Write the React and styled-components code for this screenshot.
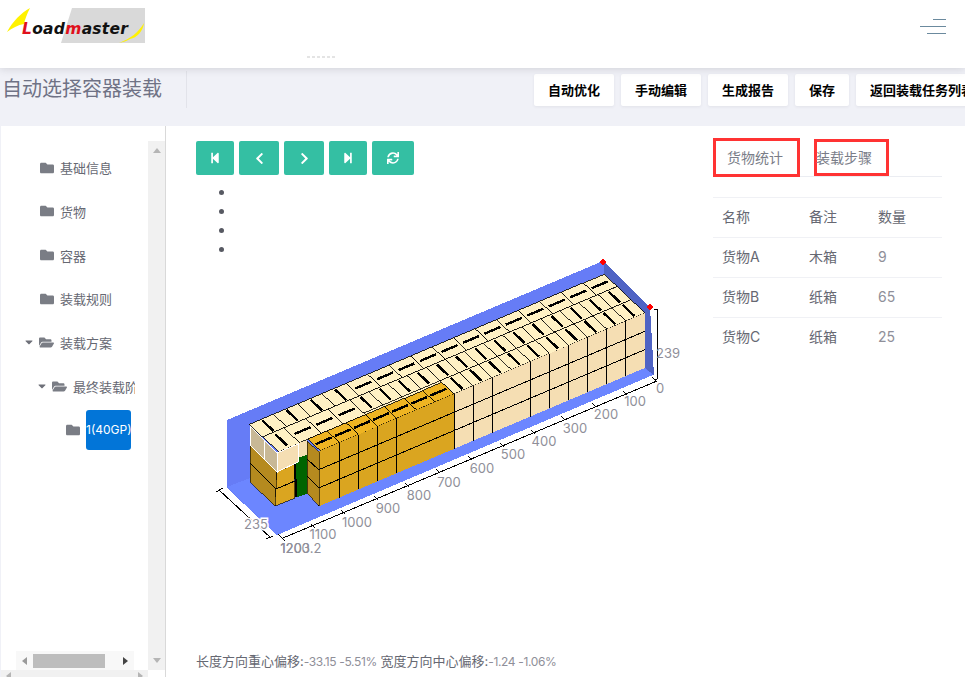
import React from 'react'
import styled, { createGlobalStyle } from 'styled-components'
import {
  FaFolder, FaFolderOpen, FaCaretDown, FaStepBackward, FaStepForward,
  FaChevronLeft, FaChevronRight, FaSync,
} from 'react-icons/fa'

const FONT = `Inter, "Noto Sans CJK SC", "Noto Sans", sans-serif`

const actions = ['自动优化', '手动编辑', '生成报告', '保存', '返回装载任务列表']

const tree = [
  { label: '基础信息', indent: 39 },
  { label: '货物', indent: 39 },
  { label: '容器', indent: 39 },
  { label: '装载规则', indent: 39 },
  { label: '装载方案', indent: 22, open: true },
  { label: '最终装载阶段', indent: 35, open: true },
  { label: '1(40GP)', indent: 65, selected: true },
]

const cargo = [
  { name: '货物A', note: '木箱', qty: 9 },
  { name: '货物B', note: '纸箱', qty: 65 },
  { name: '货物C', note: '纸箱', qty: 25 },
]

// --------------------------------
// CHART GEOMETRY
// --------------------------------

// l: cells along the container from the right end, d: 0-1 across its depth, h: px down
const pt = (l, d, h = 0) => [645 - 19.1 * l - 41 * d, 313 + 8.1 * l - 39 * d + h]
const str = (pts) => pts.map((p) => p.join(',')).join(' ')
const LAYER = 18.3

function Tile({ l0, l1, d0, d1, dash, fill = '#fff1c4' }) {
  const lc = (l0 + l1) / 2
  const dc = (d0 + d1) / 2
  const a = dash === 'l' ? pt(lc - 0.42, dc) : pt(lc, dc - 0.14)
  const b = dash === 'l' ? pt(lc + 0.42, dc) : pt(lc, dc + 0.14)
  return (
    <g>
      <polygon points={str([pt(l0, d0), pt(l1, d0), pt(l1, d1), pt(l0, d1)])} fill={fill} stroke="#000" strokeWidth="0.8" />
      <line x1={a[0]} y1={a[1]} x2={b[0]} y2={b[1]} stroke="#000" strokeWidth="2.4" />
    </g>
  )
}

function range(n) {
  return Array.from({ length: n }, (_, i) => i)
}

function FrontFace({ l0, l1, lines, fill }) {
  return (
    <g>
      <polygon points={str([pt(l0, 0), pt(l1, 0), pt(l1, 0, LAYER * 3), pt(l0, 0, LAYER * 3)])} fill={fill} />
      {lines.map((l) => {
        const a = pt(l, 0)
        const b = pt(l, 0, LAYER * 3)
        return <line key={l} x1={a[0]} y1={a[1]} x2={b[0]} y2={b[1]} stroke="#000" />
      })}
      {[1, 2].map((k) => {
        const a = pt(l0, 0, LAYER * k)
        const b = pt(l1, 0, LAYER * k)
        return <line key={k} x1={a[0]} y1={a[1]} x2={b[0]} y2={b[1]} stroke="#000" />
      })}
    </g>
  )
}

const lengthTicks = [
  [100, 635, 406], [200, 606, 419], [300, 575, 433], [400, 544, 446], [500, 513, 459], [600, 482, 473],
  [700, 449, 487], [800, 419, 500], [900, 388, 513], [1000, 357, 527], [1100, 323, 539],
]

function ContainerChart() {
  return (
    <Chart viewBox="200 258 500 320" width="500" height="320" shapeRendering="crispEdges">
      {/* walls and floor */}
      <polygon points="227,420 603,261 650,307 653,375 277,535 227,488" fill="#667cf6" />
      <polygon points="227,487 277,535 653,375 604,335 250,478" fill="#6c86ff" />
      <polygon points="604,262 650,307 654,375 645,368 645,313 604,274" fill="#4f63c4" />

      {/* top of the pale cargo */}
      <polygon points={str([pt(0, 0), pt(0, 1), pt(18.55, 1), pt(18.55, 0.29), pt(17, 0.29)])} fill="#fff1c4" />
      {range(12).map((i) => <Tile key={`b${i}`} l0={i * 1.125} l1={(i + 1) * 1.125} d0={0.68} d1={1} dash="l" />)}
      {range(14).map((i) => <Tile key={`m${i}`} l0={i} l1={i + 1} d0={0.34} d1={0.68} dash="d" />)}
      {range(10).map((i) => <Tile key={`f${i}`} l0={i} l1={i + 1} d0={0} d1={0.34} dash="d" />)}
      {range(4).map((i) => <Tile key={`e${i}`} l0={13.5 + i * 1.27} l1={13.5 + (i + 1) * 1.27} d0={0.68} d1={1} dash="d" />)}
      {range(3).map((i) => <Tile key={`n${i}`} l0={14 + i * 1.15} l1={14 + (i + 1) * 1.15} d0={0.3} d1={0.68} dash="l" />)}
      <Tile l0={17.45} l1={18.55} d0={0.29} d1={0.68} dash="d" />

      {/* pale front */}
      <FrontFace l0={0} l1={10} lines={[1, 2, 3, 4, 5, 6, 8, 9, 10]} fill="#f5deb3" />

      {/* gold block */}
      {range(7).map((i) => <Tile key={`g${i}`} l0={10 + i} l1={11 + i} d0={0} d1={0.3} dash="l" fill="#eeb422" />)}
      <FrontFace l0={10} l1={17.1} lines={[10, 13, 14, 15, 16, 17.1]} fill="#daa520" />
      <polygon points="319,452 307,441 307,493 319,506" fill="#b58a1f" stroke="#000" strokeWidth="0.6" />
      <line x1="307" y1="459" x2="319" y2="470" stroke="#000" />
      <line x1="307" y1="476" x2="319" y2="488" stroke="#000" />

      {/* left end stack */}
      <polygon points="298,443 307,440 307,456 298,460" fill="#f5deb3" />
      <polygon points="294,459 307,455 307,494 297,497" fill="#006400" />
      <line x1="295" y1="459" x2="296" y2="497" stroke="#000" strokeWidth="2" />
      <polygon points="250,445 277,472 275,506 250,482" fill="#b58a1f" stroke="#000" strokeWidth="0.6" />
      <polygon points="277,472 294,464 295,498 275,506" fill="#daa520" stroke="#000" strokeWidth="0.6" />
      <line x1="250" y1="463" x2="276" y2="489" stroke="#000" />
      <line x1="276" y1="489" x2="295" y2="481" stroke="#000" />
      <polygon points="250,426 264,440 264,459 250,445" fill="#c8b896" stroke="#fff" />
      <polygon points="264,440 277,453 277,472 264,459" fill="#c8b896" stroke="#fff" />
      <polygon points="277,453 298,444 298,462 277,472" fill="#f5deb3" stroke="#fff" />

      {/* corners */}
      <circle cx="603" cy="262" r="2.6" fill="#ff0000" />
      <circle cx="650" cy="307" r="2.6" fill="#ff0000" />

      {/* axes */}
      <g stroke="#000" fill="none">
        <line x1="657" y1="309" x2="657" y2="379" />
        <line x1="654" y1="309" x2="657" y2="309" />
        <line x1="654" y1="379" x2="657" y2="379" />
        <line x1="657" y1="381" x2="283" y2="538" />
        <line x1="278" y1="534" x2="285" y2="541" />
        {[[625, 393], [594, 405], [563, 418], [533, 432], [502, 445], [470, 458], [438, 471], [407, 485], [376, 498], [343, 512], [313, 526], [654, 379]].map(([x, y]) => (
          <line key={x} x1={x - 2} y1={y - 2} x2={x + 2} y2={y + 2} />
        ))}
        <line x1="219" y1="490" x2="271" y2="538" />
        <line x1="216" y1="492" x2="223" y2="488" />
        <line x1="266" y1="539" x2="273" y2="536" />
      </g>
      <AxisLabels textAnchor="middle">
        {lengthTicks.map(([v, x, y]) => <text key={v} x={x} y={y}>{v}</text>)}
        <text x="660" y="393">0</text>
        <text x="668" y="358">239</text>
        <HaloText x="256" y="529">235</HaloText>
        <text x="295" y="553">1200</text>
        <text x="301" y="553">1203.2</text>
      </AxisLabels>
    </Chart>
  )
}

// --------------------------------
// PAGE
// --------------------------------

function Logo() {
  return (
    <svg width="150" height="48" viewBox="0 0 150 48">
      <polygon points="72,8 145,8 145,43 61,43" fill="#d9d9d9" />
      <path d="M7 32 C13 21 21 13 30 8 C27 14 25 19 24 24 C18 25 12 28 7 32 Z" fill="#fff200" />
      <path d="M119 43 C130 39 139 32 144 23 C143 31 137 38 130 39 C127 41 123 42 119 43 Z" fill="#fff200" />
      <text x="22" y="33.5" fontFamily="'DejaVu Sans', sans-serif" fontSize="15.5" fontWeight="bold" fontStyle="italic" textLength="106">
        <tspan fill="#e0101c">L</tspan>
        <tspan fill="#111">oad</tspan>
        <tspan fill="#e0101c">m</tspan>
        <tspan fill="#111">aster</tspan>
      </text>
    </svg>
  )
}

export default function App() {
  return (
    <Page>
      <GlobalStyle />
      <Header>
        <Logo />
        <Dots />
        <Burger>
          <BurgerLine $w={13} />
          <BurgerLine $w={26} />
          <BurgerLine $w={19} />
        </Burger>
      </Header>

      <SubHeader>
        <Title>自动选择容器装载</Title>
        <Actions>
          {actions.map((a) => <ActionButton key={a}>{a}</ActionButton>)}
        </Actions>
      </SubHeader>

      <Main>
        <Sidebar>
          <SidebarBody>
            <TreeColumn>
              {tree.map((n) => (
                <TreeRow key={n.label} $indent={n.indent}>
                  {n.open && <Caret><FaCaretDown size={12} /></Caret>}
                  <FolderIcon $open={n.open}>{n.open ? <FaFolderOpen size={15} /> : <FaFolder size={14} />}</FolderIcon>
                  <TreeLabel $selected={n.selected}>{n.label}</TreeLabel>
                </TreeRow>
              ))}
              <HScroll>
                <Arrow $dir="left" $tone="#9a9a9a" />
                <Thumb />
                <Arrow $dir="right" $tone="#444" />
              </HScroll>
            </TreeColumn>
            <VScroll>
              <Arrow $dir="up" $tone="#b5b5b5" />
              <Arrow $dir="down" $tone="#b5b5b5" />
            </VScroll>
          </SidebarBody>
          <OuterScroll>
            <Arrow $dir="left" $tone="#b5b5b5" />
            <Arrow $dir="right" $tone="#b5b5b5" />
          </OuterScroll>
        </Sidebar>

        <Center>
          <StepBar>
            <StepButton $w={38}><FaStepBackward size={12} /></StepButton>
            <StepButton $w={40}><FaChevronLeft size={13} /></StepButton>
            <StepButton $w={40}><FaChevronRight size={13} /></StepButton>
            <StepButton $w={38}><FaStepForward size={12} /></StepButton>
            <StepButton $w={42}><FaSync size={12} /></StepButton>
          </StepBar>
          <Steps>
            <li>&nbsp;</li>
            <li>&nbsp;</li>
            <li>&nbsp;</li>
            <li>&nbsp;</li>
          </Steps>
          <ContainerChart />
          <Balance>
            长度方向重心偏移:<BalanceValue>-33.15 -5.51%</BalanceValue> 宽度方向中心偏移:<BalanceValue>-1.24 -1.06%</BalanceValue>
          </Balance>
        </Center>

        <Side>
          <Tabs>
            <Tab $w={87} $pad={11} $active>货物统计</Tab>
            <Tab $w={75} $pad={0} $second>装载步骤</Tab>
          </Tabs>
          <CargoTable>
            <thead>
              <tr>
                <th>名称</th>
                <th>备注</th>
                <th>数量</th>
              </tr>
            </thead>
            <tbody>
              {cargo.map((c) => (
                <tr key={c.name}>
                  <td>{c.name}</td>
                  <td>{c.note}</td>
                  <td>{c.qty}</td>
                </tr>
              ))}
            </tbody>
          </CargoTable>
        </Side>
      </Main>
    </Page>
  )
}

// --------------------------------
// STYLES
// --------------------------------

const GlobalStyle = createGlobalStyle`
  html, body { margin: 0; padding: 0; height: 100%; overflow: hidden; }
  body { font-family: ${FONT}; color: #575962; background: #f0f1f7; }
  * { box-sizing: border-box; }
`

const Page = styled.div`
  width: 965px;
  height: 677px;
  overflow: hidden;
  display: flex;
  flex-direction: column;
`

const Header = styled.header`
  position: relative;
  z-index: 2;
  flex: none;
  height: 68px;
  background: #fff;
  box-shadow: 0 1px 8px rgba(69, 65, 78, 0.18);
  display: flex;
  justify-content: space-between;
  align-items: flex-start;
  padding-right: 19px;
`

const Dots = styled.span`
  position: absolute;
  left: 307px;
  top: 56px;
  width: 30px;
  height: 2px;
  background: repeating-linear-gradient(90deg, #e4e4e4 0 3px, transparent 3px 5px);
`

const Burger = styled.div`
  display: flex;
  flex-direction: column;
  align-items: flex-end;
  gap: 6px;
  padding-top: 19px;
`

const BurgerLine = styled.span`
  display: block;
  width: ${(p) => p.$w}px;
  height: 1px;
  background: #6b8a9e;
`

const SubHeader = styled.div`
  flex: none;
  height: 58px;
  display: flex;
  align-items: flex-start;
  overflow: hidden;
`

const Title = styled.h1`
  flex: none;
  margin: 3px 0 0;
  width: 187px;
  height: 37px;
  padding: 4px 0 0 2px;
  font-size: 20px;
  font-weight: 400;
  line-height: 28px;
  color: #6f7285;
  border-right: 1px solid #e2e3ea;
  white-space: nowrap;
`

const Actions = styled.div`
  flex: none;
  display: flex;
  gap: 7px;
  margin: 6px 0 0 347px;
`

const ActionButton = styled.div`
  height: 32px;
  padding: 0 14px;
  background: #fff;
  border-radius: 2px;
  box-shadow: 0 1px 3px rgba(69, 65, 78, 0.08);
  font-size: 13px;
  font-weight: 700;
  line-height: 32px;
  color: #000;
  white-space: nowrap;
  flex: none;
`

const Main = styled.main`
  flex: 1;
  min-height: 0;
  margin-left: 1px;
  background: #fff;
  display: flex;
`

const Sidebar = styled.aside`
  flex: none;
  width: 165px;
  border-right: 1px solid #d9d9d9;
  display: flex;
  flex-direction: column;
`

const SidebarBody = styled.div`
  flex: 1;
  min-height: 0;
  display: flex;
`

const TreeColumn = styled.div`
  flex: none;
  width: 147px;
  padding-top: 19.9px;
  display: flex;
  flex-direction: column;
`

const TreeRow = styled.div`
  height: 43.67px;
  flex: none;
  display: flex;
  align-items: center;
  padding-left: ${(p) => p.$indent}px;
  font-size: 13px;
  color: #666872;
  overflow: hidden;
`

const Caret = styled.span`
  display: flex;
  width: 16px;
  flex: none;
  color: #6e7079;
`

const FolderIcon = styled.span`
  display: flex;
  width: ${(p) => (p.$open ? 21 : 20)}px;
  flex: none;
  color: #7a7d85;
`

const TreeLabel = styled.span`
  white-space: nowrap;
  overflow: hidden;
  max-width: ${(p) => (p.$selected ? '45px' : '62px')};
  ${(p) => p.$selected && `
    height: 40px;
    line-height: 40px;
    background: #0275d8;
    color: #fff;
    border-radius: 3px;
    font-size: 12px;
    text-align: center;
    flex: 0 0 45px;
  `}
`

const HScroll = styled.div`
  margin: auto 14px 0 15px;
  height: 19px;
  background: #f8f8f8;
  display: flex;
  align-items: center;
  padding: 0 6px;
`

const Thumb = styled.div`
  width: 72px;
  height: 14px;
  margin: 0 auto 0 6px;
  background: #bdbdbd;
`

const VScroll = styled.div`
  flex: 1;
  margin-top: 15px;
  background: #f1f1f1;
  display: flex;
  flex-direction: column;
  align-items: center;
  justify-content: space-between;
  padding: 7px 0;
`

const OuterScroll = styled.div`
  flex: none;
  width: 147px;
  height: 7px;
  padding: 2px 5px 0;
  background: #f1f1f1;
  display: flex;
  justify-content: space-between;
`

const Arrow = styled.span`
  width: 0;
  height: 0;
  flex: none;
  border-style: solid;
  border-color: transparent;
  ${(p) => p.$dir === 'up' && `border-width: 0 4px 5px; border-bottom-color: ${p.$tone};`}
  ${(p) => p.$dir === 'down' && `border-width: 5px 4px 0; border-top-color: ${p.$tone};`}
  ${(p) => p.$dir === 'left' && `border-width: 4px 5px 4px 0; border-right-color: ${p.$tone};`}
  ${(p) => p.$dir === 'right' && `border-width: 4px 0 4px 5px; border-left-color: ${p.$tone};`}
`

const Center = styled.section`
  flex: none;
  width: 547px;
  padding: 15px 0 7px 30px;
  display: flex;
  flex-direction: column;
`

const StepBar = styled.div`
  display: flex;
  gap: 5px;
`

const StepButton = styled.button`
  width: ${(p) => p.$w}px;
  height: 34px;
  padding: 0;
  border: 0;
  border-radius: 2px;
  background: #34bfa3;
  color: #fff;
  display: flex;
  align-items: center;
  justify-content: center;
`

const Steps = styled.ul`
  margin: 7px 0 1px;
  padding: 0 0 0 40px;
  list-style: disc;
  font-size: 16px;
  line-height: 19px;
  color: #575962;
`

const Chart = styled.svg`
  display: block;
  margin: -1px 0 0 4px;
  flex: none;
`

const HaloText = styled.text`
  stroke: #fff;
  stroke-width: 3px;
  paint-order: stroke;
`

const AxisLabels = styled.g`
  font-family: ${FONT};
  font-size: 13px;
  fill: #8f8f99;
`

const Balance = styled.div`
  margin-top: auto;
  font-size: 13px;
  line-height: 16px;
  color: #666872;
  white-space: nowrap;
`

const BalanceValue = styled.span`
  font-size: 12px;
  letter-spacing: -0.35px;
  color: #8f8f99;
`

const Side = styled.section`
  flex: none;
  width: 229px;
  padding-top: 12px;
`

const Tabs = styled.div`
  display: flex;
  align-items: flex-start;
  height: 39px;
  border-bottom: 1px solid #ebedf2;
`

const Tab = styled.div`
  flex: none;
  width: ${(p) => p.$w}px;
  height: ${(p) => (p.$second ? 37 : 39)}px;
  margin: ${(p) => (p.$second ? '1px 0 0 14px' : 0)};
  padding-left: ${(p) => p.$pad}px;
  border: 3px solid #ff3333;
  font-size: 14px;
  line-height: ${(p) => (p.$second ? 31 : 33)}px;
  color: #7a7d88;
  text-indent: ${(p) => (p.$second ? '-1px' : 0)};
  white-space: nowrap;
  overflow: visible;
`

const CargoTable = styled.table`
  width: 100%;
  margin-top: 20px;
  border-collapse: collapse;
  table-layout: fixed;
  font-size: 14px;
  color: #666872;

  th, td {
    height: 40px;
    padding: 0 0 3px 9px;
    border-top: 1px solid #f0f1f5;
    font-weight: 400;
    text-align: left;
  }

  th:nth-child(1), td:nth-child(1) { width: 87px; }
  th:nth-child(2), td:nth-child(2) { width: 69px; }
  td:nth-child(3) { color: #8f8f99; }
`
